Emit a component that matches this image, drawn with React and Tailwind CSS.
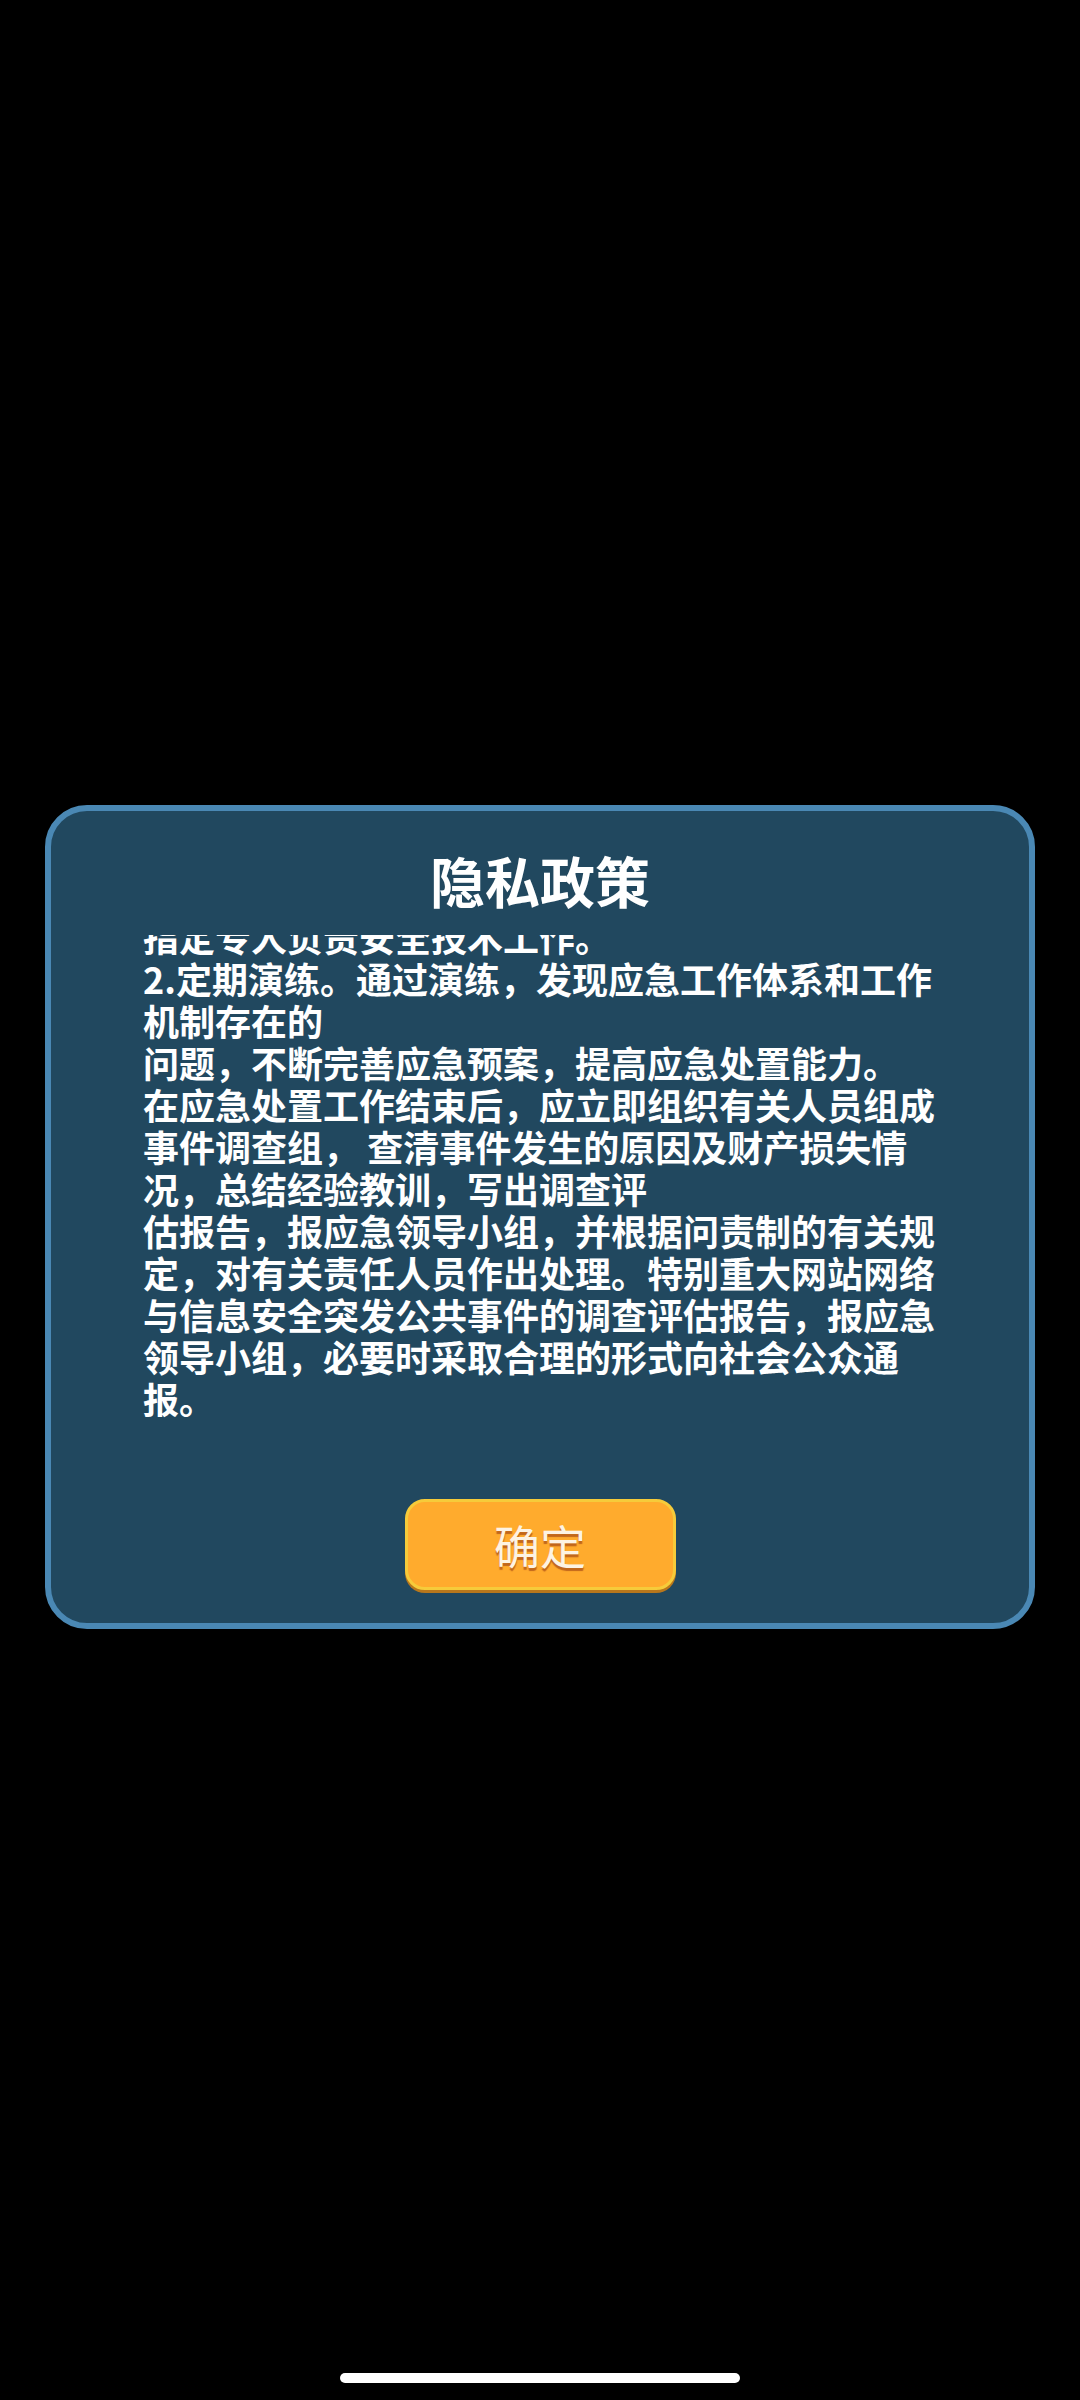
import React from "react";

const lines = [
  "1.建立健全应急处置机制，明确各部门职责分工，",
  "指定专人负责安全技术工作。",
  "2.定期演练。通过演练，发现应急工作体系和工作",
  "机制存在的",
  "问题，不断完善应急预案，提高应急处置能力。",
  "在应急处置工作结束后，应立即组织有关人员组成",
  "事件调查组， 查清事件发生的原因及财产损失情",
  "况，总结经验教训，写出调查评",
  "估报告，报应急领导小组，并根据问责制的有关规",
  "定，对有关责任人员作出处理。特别重大网站网络",
  "与信息安全突发公共事件的调查评估报告，报应急",
  "领导小组，必要时采取合理的形式向社会公众通",
  "报。",
];

export default function App() {
  return (
    <div className="w-[1080px] h-[2400px] bg-black flex flex-col items-center pt-[805px] font-['Noto_Sans_CJK_SC','Noto_Sans',sans-serif] relative">
      <div className="w-[990px] h-[824px] rounded-[42px] border-[6px] border-[#4a88b4] bg-[#21485f] flex flex-col items-center">
        <div className="pt-[33px] h-[103px] text-[55px] leading-[70px] font-bold text-white">
          隐私政策
        </div>
        <div className="mt-[21px] w-[794px] h-[484px] overflow-hidden flex flex-col justify-end text-white text-[36px] leading-[42px] font-bold">
          {lines.map((l, i) => (
            <div key={i} className="whitespace-pre">
              {l}
            </div>
          ))}
        </div>
        <button className="mt-[80px] w-[271px] h-[91px] rounded-[20px] border-[3px] border-[#f6cb3a] bg-[#ffab2d] shadow-[0_3px_0_#b8771c] flex items-center justify-center text-[46px] text-[#fdf3e3] [text-shadow:0_3px_1px_#c1661c]">
          确定
        </button>
      </div>
      <div className="absolute left-[340px] top-[2373px] w-[400px] h-[10px] rounded-full bg-white" />
    </div>
  );
}
